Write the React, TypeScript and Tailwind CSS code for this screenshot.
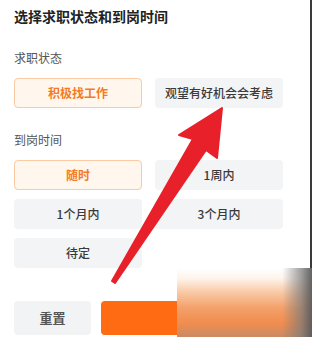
import React from "react";

const font = { fontFamily: '"Noto Sans CJK SC", "Noto Sans", sans-serif' };

function Opt({ label, active }: { label: string; active?: boolean }) {
  return active ? (
    <div className="h-[30px] w-[128px] rounded-[4px] border border-[#fbc9a2] bg-[#fff6ee] flex items-center justify-center text-[12px] font-bold text-[#f47a26]">
      {label}
    </div>
  ) : (
    <div className="h-[30px] w-[128px] rounded-[4px] bg-[#f3f4f6] flex items-center justify-center text-[12px] font-medium text-[#3a3a3a]">
      {label}
    </div>
  );
}

export default function App() {
  return (
    <div className="relative w-[312px] h-[337px] overflow-hidden bg-white flex" style={font}>
      <div className="w-[310px] h-full pl-[14px] pt-[6px] flex flex-col">
        <div className="text-[14px] leading-[20px] font-bold text-[#222]">选择求职状态和到岗时间</div>
        <div className="mt-[24px] text-[12px] leading-[16px] text-[#555]">求职状态</div>
        <div className="mt-[12px] flex gap-[13px]">
          <Opt label="积极找工作" active />
          <Opt label="观望有好机会会考虑" />
        </div>
        <div className="mt-[24px] text-[12px] leading-[16px] text-[#555]">到岗时间</div>
        <div className="mt-[12px] grid grid-cols-[128px_128px] gap-x-[13px] gap-y-[9px]">
          <Opt label="随时" active />
          <Opt label="1周内" />
          <Opt label="1个月内" />
          <Opt label="3个月内" />
          <Opt label="待定" />
        </div>
        <div className="mt-[33px] flex gap-[10px]">
          <div className="h-[34px] w-[77px] rounded-[4px] bg-[#f2f3f5] flex items-center justify-center text-[13px] font-bold text-[#555]">
            重置
          </div>
          <div className="h-[34px] w-[197px] rounded-[4px] bg-[#ff6b12]" />
        </div>
      </div>
      <div className="w-[2px] h-full bg-[#3a3a3a]" />

      <svg className="absolute left-0 top-0 pointer-events-none" width="312" height="337" viewBox="0 0 312 337">
        <polygon
          points="112,281 193,139 179,135 222,108 217,158 206,150 115,283"
          fill="#e8202a"
          stroke="#e8202a"
          strokeWidth="2"
          strokeLinejoin="round"
        />
      </svg>

      <div className="absolute left-[177px] top-[268px] w-[135px] h-[69px] bg-[linear-gradient(to_bottom,#ffffff_0%,#fef4ec_15%,#f9c9a6_35%,#f3a06a_58%,#f08d4f_80%,#c98a64_100%)]">
        <div className="absolute inset-0 bg-[linear-gradient(to_right,rgba(120,120,120,0)_0%,rgba(120,120,120,0)_78%,rgba(120,120,120,0.7)_92%,rgba(90,90,90,0.95)_100%)]" />
      </div>
    </div>
  );
}
